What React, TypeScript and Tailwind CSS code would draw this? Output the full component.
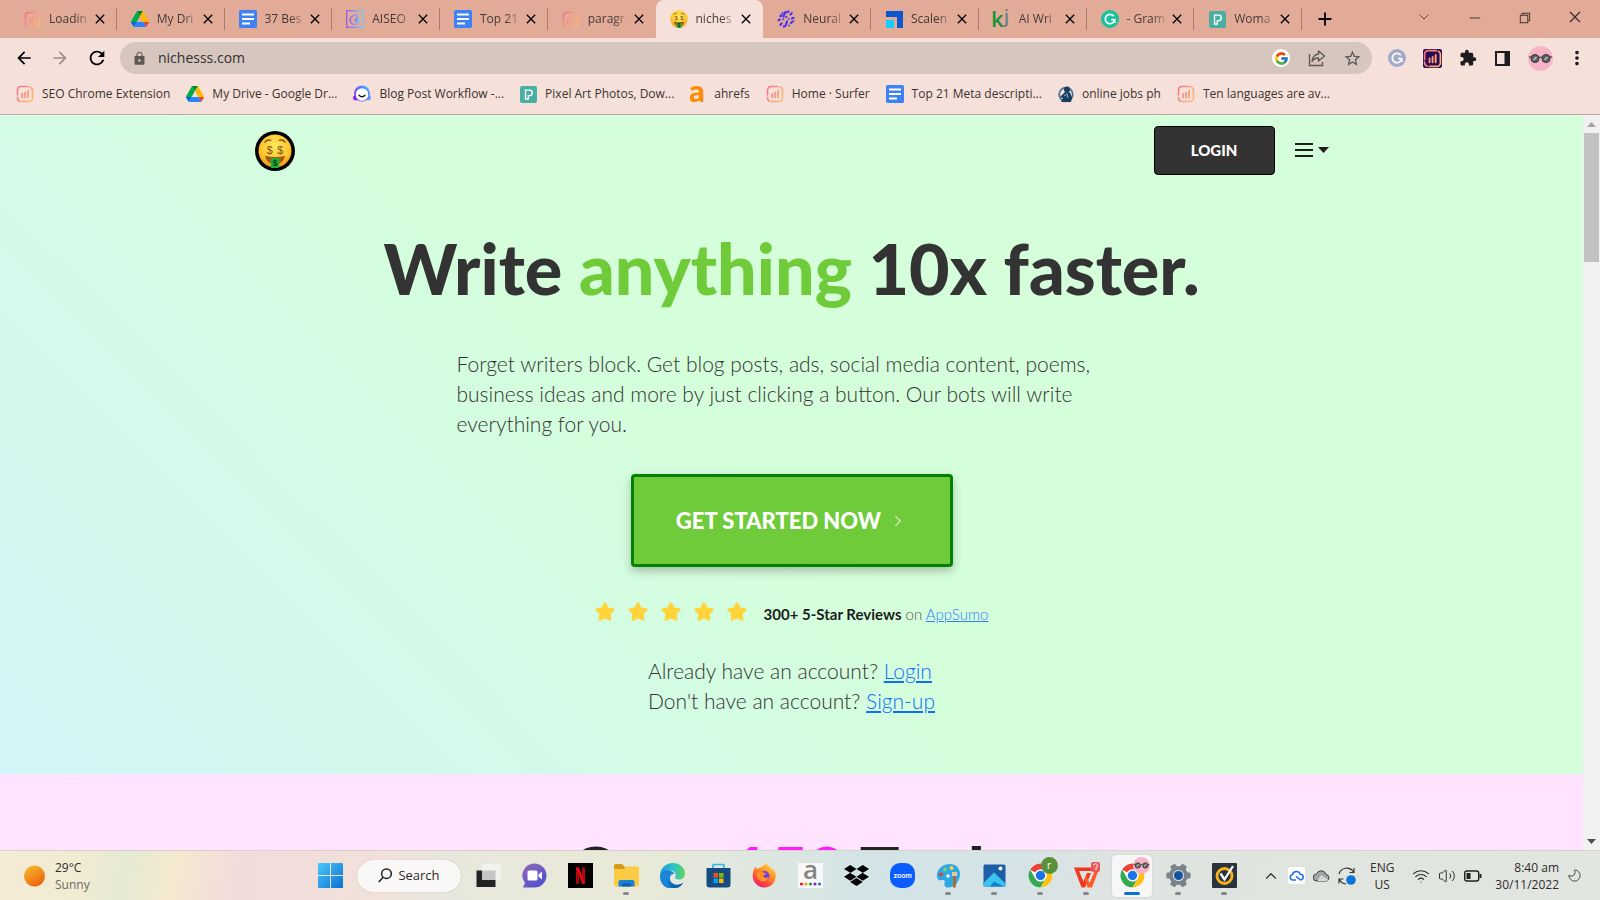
import type { ReactNode } from "react";
import { FcGoogle } from "react-icons/fc";
import { FaDropbox } from "react-icons/fa";
import {
  MdArrowBack,
  MdArrowForward,
  MdRefresh,
  MdLock,
  MdStarBorder,
  MdExtension,
  MdMoreVert,
  MdClose,
  MdAdd,
} from "react-icons/md";
import { VscChromeMinimize, VscChromeRestore, VscChromeClose } from "react-icons/vsc";
import { ChevronDown, ChevronRight, ChevronUp, Moon, Volume2, Wifi } from "lucide-react";

function SurferIcon({ size = 18, dark = false }: { size?: number; dark?: boolean }) {
  return (
    <svg width={size} height={size} viewBox="0 0 18 18" fill="none" className="shrink-0">
      <defs>
        <linearGradient id="surfer" gradientUnits="userSpaceOnUse" x1="1" y1="3" x2="17" y2="12">
          <stop offset="0" stopColor="#f4708a" />
          <stop offset="1" stopColor="#fbb974" />
        </linearGradient>
      </defs>
      {dark && <rect width="18" height="18" rx="2" fill="#2b0a4d" />}
      <g stroke="url(#surfer)" strokeWidth="1.6" strokeLinecap="round">
        <path d="M1.500 10V5a3.500 3.500 0 0 1 3.500-3.500h7.500" />
        <path d="M14.500 2.100A3.500 3.500 0 0 1 16.500 5v8a3.500 3.500 0 0 1-3.500 3.500H6" />
        <path d="M1.500 12.500A3.600 3.600 0 0 0 4 16.300" />
        <path d="M6.200 9v3.600M9.100 7.600v5M12 5.600v7" strokeWidth="1.8" />
      </g>
    </svg>
  );
}

function DriveIcon() {
  return (
    <svg width="18" height="18" viewBox="0 0 87.3 78" className="shrink-0">
      <path fill="#0066da" d="m6.6 66.85 3.85 6.65c.8 1.4 1.95 2.5 3.3 3.3L27.5 53H0c0 1.55.4 3.1 1.2 4.5z" />
      <path fill="#00ac47" d="M43.65 25 29.9 1.2c-1.35.8-2.5 1.9-3.3 3.3L1.2 48.5A9 9 0 0 0 0 53h27.5z" />
      <path fill="#ea4335" d="M73.55 76.8c1.35-.8 2.5-1.9 3.3-3.3l9.2-16c.8-1.4 1.2-2.95 1.2-4.5H59.8l5.85 11.5z" />
      <path fill="#00832d" d="M43.65 25 57.4 1.2C56.05.4 54.5 0 52.9 0H34.4c-1.6 0-3.15.45-4.5 1.2z" />
      <path fill="#2684fc" d="M59.8 53H27.5L13.75 76.8c1.35.8 2.9 1.2 4.5 1.2h50.8c1.6 0 3.15-.45 4.5-1.2z" />
      <path fill="#ffba00" d="m73.4 26.5-12.7-22c-.8-1.4-1.95-2.5-3.3-3.3L43.65 25 59.8 53h27.45c0-1.55-.4-3.1-1.2-4.5z" />
    </svg>
  );
}

function DocsIcon() {
  return (
    <svg width="18" height="18" viewBox="0 0 18 18" className="shrink-0">
      <rect width="18" height="18" rx="1.5" fill="#3f82f5" />
      <path d="M3 4.500h12M3 9h12M3 13.500h8" stroke="#fff" strokeWidth="2" />
    </svg>
  );
}

function AiseoIcon() {
  return (
    <svg width="18" height="18" viewBox="0 0 18 18" fill="none" className="shrink-0">
      <defs>
        <linearGradient id="aiseo" x1="0" y1="0" x2="1" y2="0">
          <stop offset="0" stopColor="#9a63e8" />
          <stop offset="1" stopColor="#7cc6ee" />
        </linearGradient>
      </defs>
      <rect x="0.7" y="0.7" width="16.6" height="16.6" stroke="url(#aiseo)" strokeWidth="1.4" />
      <path d="M12.600 4.400C8 4.600 4.200 6.800 4.200 10.200c0 2.600 2 4.200 4.300 4.200 3 0 4.700-2.300 4.700-5.300" stroke="url(#aiseo)" strokeWidth="1.5" />
      <path d="M12.600 4.400v5.200c-.6 1.800-2 2.600-3.800 2.600-.6-2.800.6-5 3.800-7.800z" fill="url(#aiseo)" />
    </svg>
  );
}

function MoneyFace({ size = 18 }: { size?: number }) {
  return (
    <svg width={size} height={size} viewBox="0 0 32 32" className="shrink-0">
      <defs>
        <radialGradient id="face" cx="0.5" cy="0.35" r="0.65">
          <stop offset="0" stopColor="#ffe95c" />
          <stop offset="0.7" stopColor="#fdc52d" />
          <stop offset="1" stopColor="#f0941c" />
        </radialGradient>
      </defs>
      <circle cx="16" cy="16" r="15.500" fill="url(#face)" />
      <path d="M6.500 7.500q2.500-2.500 5.500-1.500M25.500 7.500Q23 5 20 6" stroke="#8a4b14" strokeWidth="1.300" fill="none" strokeLinecap="round" />
      <g fill="#7a4a12" fontFamily="Liberation Sans, sans-serif" fontSize="10" textAnchor="middle">
        <text x="11" y="18.500">$</text>
        <text x="21" y="18.500">$</text>
      </g>
      <path d="M6.500 20.500q9.500 2.500 19 0-1.500 8-9.500 8t-9.500-8z" fill="#a05c14" />
      <rect x="12" y="22.500" width="8" height="9.500" rx="1.500" fill="#1fae3c" />
      <text x="16" y="30.200" fill="#073d12" fontFamily="Liberation Sans, sans-serif" fontSize="8" fontWeight="700" textAnchor="middle">
        $
      </text>
    </svg>
  );
}

function NeuralIcon() {
  return (
    <svg width="18" height="18" viewBox="0 0 18 18" fill="none" stroke="#4b32f0" strokeLinecap="round" className="shrink-0">
      <g strokeWidth="2.200">
        <path d="M9.500 2.200l2-.8M13.500 4.500l1.200-1.400M15 8.500l1.400-.7M14 13l1-1M4.500 5l-1 1.200M2.800 9.600l-1.200.6M4.500 13.500l-1 1.400M8.500 15.800l-1.600.8M6.500 6.500L8 2.500M10 11.500l-1 3" />
      </g>
      <g strokeWidth="1.800">
        <path d="M6.200 9.200v.1M9 7.200l.5-.6M11.800 8.800v.1M12 15.500v.1M5.500 2.700v.1M16.500 11v.1" />
      </g>
    </svg>
  );
}

function ScalenutIcon() {
  return (
    <svg width="17" height="17" viewBox="0 0 17 17" className="shrink-0">
      <path d="M0 0h17v17h-6V6H0z" fill="#0a57d0" />
      <path d="M0 9h8v8H0z" fill="#16cdfb" />
    </svg>
  );
}

function GrammarlyIcon({ fill = "#15c39a" }: { fill?: string }) {
  return (
    <svg width="18" height="18" viewBox="0 0 18 18" className="shrink-0">
      <circle cx="9" cy="9" r="9" fill={fill} />
      <path d="M12.800 6.200A4.700 4.700 0 1 0 13.700 9.600H10.200M13.700 9.600v3.400" stroke="#fff" strokeWidth="1.700" fill="none" />
    </svg>
  );
}

function PixelIcon() {
  return (
    <svg width="17" height="17" viewBox="0 0 17 17" className="shrink-0">
      <rect width="17" height="17" rx="2" fill="#4aafa2" />
      <path d="M5.500 13V4.200h4a2.700 2.700 0 0 1 0 5.500H8.300V13z" fill="none" stroke="#fff" strokeWidth="1.300" />
    </svg>
  );
}

function BlogIcon() {
  return (
    <svg width="18" height="18" viewBox="0 0 18 18" className="shrink-0">
      <defs>
        <linearGradient id="blog" x1="0" y1="1" x2="1" y2="0">
          <stop offset="0" stopColor="#8b2cf5" />
          <stop offset="0.5" stopColor="#6a5cf6" />
          <stop offset="1" stopColor="#2fd0fb" />
        </linearGradient>
      </defs>
      <circle cx="9" cy="8.500" r="8" fill="url(#blog)" />
      <circle cx="2.600" cy="12.800" r="2.600" fill="#8b2cf5" />
      <circle cx="15.200" cy="12.600" r="2.600" fill="#5d8df8" />
      <circle cx="9" cy="9.500" r="6.300" fill="#fff" />
      <path d="M6 10.200q3 3 6 0" stroke="#111" strokeWidth="1.300" fill="none" strokeLinecap="round" />
    </svg>
  );
}

function KjIcon() {
  return (
    <svg width="19" height="20" viewBox="0 0 19 20" className="shrink-0" fontFamily="Open Sans, sans-serif" fontWeight="600">
      <text x="-1" y="18" fontSize="22" fill="#14953a">
        k
      </text>
      <text x="12" y="14" fontSize="18" fill="#6d7f86">
        j
      </text>
    </svg>
  );
}

function AhrefsIcon() {
  return (
    <svg width="16" height="17" viewBox="0 0 16 17" className="shrink-0">
      <text x="-1" y="16" fill="#ff8b00" fontFamily="Lato, sans-serif" fontSize="31" fontWeight="900">
        a
      </text>
    </svg>
  );
}

function JobsIcon() {
  return (
    <svg width="16" height="17" viewBox="0 0 16 17" className="shrink-0">
      <circle cx="8" cy="8.500" r="6.800" fill="none" stroke="#4f7391" strokeWidth="1.800" />
      <circle cx="9" cy="3.400" r="3" fill="#123f63" />
      <path d="M7 6l5 .5 2 5-1 4.500H3l2-4-3-1 3-3z" fill="#123f63" />
      <path d="M6 10l3-2 1 4" stroke="#9fb9cc" fill="none" />
    </svg>
  );
}

function ChromeIcon({ size = 25 }: { size?: number }) {
  return (
    <svg width={size} height={size} viewBox="0 0 48 48" className="shrink-0">
      <circle cx="24" cy="24" r="23" fill="#fff" />
      <path d="M4.080 12.500A23 23 0 0 1 43.900 12.500H24A11.500 11.500 0 0 0 14 18.300z" fill="#ea4335" />
      <path d="M4.080 12.500A23 23 0 0 0 24 47L33.960 29.750A11.500 11.500 0 0 1 14.040 29.750z" fill="#34a853" />
      <path d="M43.900 12.500A23 23 0 0 1 24 47L33.960 29.750A11.500 11.500 0 0 0 24 12.500z" fill="#fbc116" />
      <circle cx="24" cy="24" r="11.500" fill="#fff" />
      <circle cx="24" cy="24" r="9" fill="#1a73e8" />
    </svg>
  );
}

function GlassesAvatar({ size }: { size: number }) {
  return (
    <svg width={size} height={size} viewBox="0 0 25 25" className="shrink-0">
      <circle cx="12.500" cy="12.500" r="12.500" fill="#f7b4c8" />
      <circle cx="7" cy="12.500" r="4" fill="#5d6062" stroke="#333" />
      <circle cx="18" cy="12.500" r="4" fill="#5d6062" stroke="#333" />
      <path d="M11 11.500q1.500-1 3 0M1 11h2M22 11h2" stroke="#222" fill="none" />
      <path d="M5.500 14l3-3M16.500 14l3-3" stroke="#b9c1c2" strokeWidth="1.500" />
    </svg>
  );
}

const tabs: { title: string; icon: ReactNode; active?: boolean }[] = [
  { title: "Loadin", icon: <SurferIcon size={17} /> },
  { title: "My Dri", icon: <DriveIcon /> },
  { title: "37 Bes", icon: <DocsIcon /> },
  { title: "AISEO", icon: <AiseoIcon /> },
  { title: "Top 21", icon: <DocsIcon /> },
  { title: "paragr", icon: <SurferIcon size={17} /> },
  { title: "niches", icon: <MoneyFace />, active: true },
  { title: "Neural", icon: <NeuralIcon /> },
  { title: "Scalen", icon: <ScalenutIcon /> },
  { title: "AI Wri", icon: <KjIcon /> },
  { title: "- Gram", icon: <GrammarlyIcon /> },
  { title: "Woma", icon: <PixelIcon /> },
];

const bookmarks: { title: string; icon: ReactNode }[] = [
  { title: "SEO Chrome Extension", icon: <SurferIcon /> },
  { title: "My Drive - Google Dr...", icon: <DriveIcon /> },
  { title: "Blog Post Workflow -...", icon: <BlogIcon /> },
  { title: "Pixel Art Photos, Dow...", icon: <PixelIcon /> },
  { title: "ahrefs", icon: <AhrefsIcon /> },
  { title: "Home · Surfer", icon: <SurferIcon /> },
  { title: "Top 21 Meta descripti...", icon: <DocsIcon /> },
  { title: "online jobs ph", icon: <JobsIcon /> },
  { title: "Ten languages are av...", icon: <SurferIcon /> },
];

function TabStrip() {
  return (
    <div className="flex h-[38px] shrink-0 bg-[#e2ab98] pl-[9px]">
      <div className="flex min-w-0 flex-1">
        {tabs.map((t, i) => {
          const beforeActive = tabs[i + 1]?.active;
          return (
            <div
              key={i}
              className={`flex min-w-0 flex-1 items-center pl-[14px] ${
                t.active ? "rounded-t-lg bg-[#f5e1d9]" : ""
              }`}
            >
              <span className="flex w-[18px] shrink-0 justify-center">{t.icon}</span>
              <span className="ml-2 min-w-0 flex-1 [mask-image:linear-gradient(to_right,black_60%,transparent)] text-xs whitespace-nowrap text-[#453a37]">
                {t.title}
              </span>
              <button aria-label={`Close ${t.title}`} className="shrink-0 text-black">
                <MdClose size={16} />
              </button>
              <span className={`ml-2 h-[22px] w-px ${t.active || beforeActive ? "" : "bg-[#a87c6e]"}`} />
            </div>
          );
        })}
      </div>
      <div className="flex w-[298px] shrink-0 items-center text-[#3a302d]">
        <button aria-label="New tab" className="ml-3 text-black">
          <MdAdd size={22} />
        </button>
        <div className="mr-[17px] mb-1 ml-auto flex items-center gap-[35px]">
          <button aria-label="Search tabs">
            <ChevronDown size={16} strokeWidth={1.25} />
          </button>
          <button aria-label="Minimize">
            <VscChromeMinimize size={15} />
          </button>
          <button aria-label="Restore">
            <VscChromeRestore size={15} />
          </button>
          <button aria-label="Close window">
            <VscChromeClose size={16} />
          </button>
        </div>
      </div>
    </div>
  );
}

function Toolbar() {
  return (
    <div className="flex h-10 shrink-0 items-center bg-[#f5e1d9] pr-4 pl-[14px]">
      <div className="flex w-[106px] items-center gap-4">
        <button aria-label="Back">
          <MdArrowBack size={20} />
        </button>
        <button aria-label="Forward" className="text-[#9c8f8a]">
          <MdArrowForward size={20} />
        </button>
        <button aria-label="Reload">
          <MdRefresh size={22} />
        </button>
      </div>
      <div className="flex h-8 min-w-0 flex-1 items-center rounded-full bg-[#d6c6be] pr-[10px] pl-3 text-[#5f5855]">
        <MdLock size={15} className="shrink-0" />
        <input
          aria-label="Address"
          defaultValue="nichesss.com"
          className="ml-[11px] min-w-0 flex-1 bg-transparent text-sm text-[#35302e] outline-none"
        />
        <span className="flex size-[18px] items-center justify-center rounded-full bg-white">
          <FcGoogle size={15} />
        </span>
        <button aria-label="Share" className="ml-[18px]">
          <svg width="18" height="18" viewBox="0 0 18 18" fill="none" stroke="currentColor" strokeWidth="1.400">
            <path d="M1.500 5v11.500h13V13" />
            <path d="M10.500 2l6 5-6 5V9c-3 0-5 1-6.500 3.500C4.500 8.500 6.500 5.500 10.500 5z" strokeLinejoin="round" />
          </svg>
        </button>
        <button aria-label="Bookmark" className="ml-[17px]">
          <MdStarBorder size={19} />
        </button>
      </div>
      <div className="ml-4 flex items-center gap-[17px] text-[#1d1d20]">
        <GrammarlyIcon fill="#a3aac9" />
        <SurferIcon size={19} dark />
        <button aria-label="Extensions">
          <MdExtension size={18} />
        </button>
        <button aria-label="Side panel">
          <svg width="17" height="17" viewBox="0 0 17 17">
            <path fillRule="evenodd" d="M1 1h15v15H1zM3 3h7.500v11H3z" fill="currentColor" />
          </svg>
        </button>
        <GlassesAvatar size={25} />
        <button aria-label="Menu" className="-mx-1">
          <MdMoreVert size={22} />
        </button>
      </div>
    </div>
  );
}

function Bookmarks() {
  return (
    <nav className="flex h-[37px] shrink-0 items-center gap-4 overflow-hidden border-b border-[#c6a9a5] bg-[#f5e1d9] px-4 pb-1">
      {bookmarks.map((b) => (
        <a key={b.title} href="#" className="flex shrink-0 items-center gap-2 text-xs text-[#3b3331]">
          {b.icon}
          {b.title}
        </a>
      ))}
    </nav>
  );
}

function Star() {
  return (
    <svg width="20" height="20" viewBox="0 0 20 20" className="shrink-0">
      <path
        d="M10 2l2.500 5 5.500.8-4 3.900.9 5.500-4.900-2.600-4.900 2.600.9-5.500-4-3.900 5.500-.8z"
        fill="#ffd43b"
        stroke="#ffd43b"
        strokeWidth="3"
        strokeLinejoin="round"
      />
    </svg>
  );
}

function Page() {
  return (
    <main className="min-w-0 flex-1 overflow-hidden bg-[#ffe3ff] font-['Lato',sans-serif] text-[#333]">
      <section className="bg-[linear-gradient(45deg,#d1f5f8,#d5ffda_48%)] pb-[58px]">
        <header className="mx-auto flex max-w-[1074px] items-center pt-[11px]">
          <a href="#" aria-label="Home" className="flex size-10 items-center justify-center rounded-full bg-black">
            <MoneyFace size={34} />
          </a>
          <button className="ml-auto h-[49px] w-[121px] rounded border border-black bg-[#333] text-[15px] font-black text-white">
            LOGIN
          </button>
          <button aria-label="Open menu" className="ml-5 text-[#1f1f1f]">
            <svg width="34" height="16" viewBox="0 0 34 16" fill="currentColor">
              <path d="M0 0h18v2H0zM0 6h18v2H0zM0 12h18v2H0zM23 4h11l-5.500 6z" />
            </svg>
          </button>
        </header>
        <div className="flex flex-col items-center">
          <h1 className="mt-[53px] text-[70px] leading-[80px] font-black">
            Write <span className="text-[#6fcb3a]">anything</span> 10x faster.
          </h1>
          <p className="mt-[41px] w-[670px] text-[21px] leading-[30px] font-light">
            Forget writers block. Get blog posts, ads, social media content, poems, business ideas and more by just
            clicking a button. Our bots will write everything for you.
          </p>
          <button className="mt-[35px] flex h-[93px] w-[322px] items-center justify-center gap-2 rounded border-[3px] border-[#028102] bg-[#6fcb3a] text-[22px] font-black text-white shadow-[0_4px_10px_rgba(0,0,0,0.25)]">
            GET STARTED NOW
            <ChevronRight size={18} className="opacity-60" />
          </button>
          <div className="mt-[33px] flex items-center gap-[13px]">
            {[0, 1, 2, 3, 4].map((i) => (
              <Star key={i} />
            ))}
            <p className="ml-1 pt-1 text-[15px] leading-5 font-light text-[#555]">
              <strong className="font-bold text-[#1c1c1c]">300+ 5-Star Reviews</strong> on{" "}
              <a href="#" className="text-[#2b7cff] underline">
                AppSumo
              </a>
            </p>
          </div>
          <p className="mt-8 text-[21px] leading-[30px] font-light">
            Already have an account?{" "}
            <a href="#" className="text-[#0d6efd] underline">
              Login
            </a>
            <br />
            Don't have an account?{" "}
            <a href="#" className="text-[#0d6efd] underline">
              Sign-up
            </a>
          </p>
        </div>
      </section>
      <section className="pt-[57px] text-center">
        <h2 className="text-[66px] leading-[80px] font-black text-[#222]">
          Over <span className="text-[#ff1cf7]">150</span> Tools
        </h2>
      </section>
    </main>
  );
}

function Scrollbar() {
  return (
    <div className="flex w-[17px] shrink-0 flex-col items-center bg-[#f1f1f1]">
      <svg width="17" height="18" viewBox="0 0 17 18" className="shrink-0">
        <path d="M4 12h9l-4.500-5z" fill="#a3a3a3" />
      </svg>
      <div className="h-[129px] w-[15px] bg-[#c1c1c1]" />
      <svg width="17" height="18" viewBox="0 0 17 18" className="mt-auto shrink-0">
        <path d="M4 7h9l-4.500 5z" fill="#505050" />
      </svg>
    </div>
  );
}

const apps: { name: string; icon: ReactNode; running?: boolean; focused?: boolean }[] = [
  {
    name: "Task view",
    icon: (
      <svg width="25" height="25" viewBox="0 0 25 25">
        <rect x="0.500" y="7.500" width="19" height="16.500" fill="#222" />
        <rect x="6" y="0.500" width="19" height="16.500" fill="#f3f3f3" fillOpacity="0.780" />
      </svg>
    ),
  },
  {
    name: "Chat",
    icon: (
      <svg width="25" height="25" viewBox="0 0 25 25">
        <defs>
          <linearGradient id="chat" x1="0" y1="0" x2="0.800" y2="1">
            <stop offset="0" stopColor="#9469b9" />
            <stop offset="1" stopColor="#4c50d0" />
          </linearGradient>
        </defs>
        <path d="M12.500.5a12 12 0 1 1 0 24H1l2-4.500A12 12 0 0 1 12.500.5z" fill="url(#chat)" />
        <rect x="5.500" y="7.500" width="10" height="10" rx="1.500" fill="#fff" />
        <path d="M16.500 11.500l3.500-3v8l-3.500-3z" fill="#fff" />
      </svg>
    ),
  },
  {
    name: "Netflix",
    icon: (
      <svg width="25" height="25" viewBox="0 0 25 25">
        <rect width="25" height="25" fill="#000" />
        <path d="M8 4.500h3V20.500L8 21zM14 4.500h3V21l-3-.5z" fill="#b1060f" />
        <path d="M8 4.500h3l6 16.500-3-.5z" fill="#e50914" />
      </svg>
    ),
  },
  {
    name: "File Explorer",
    running: true,
    icon: (
      <svg width="25" height="25" viewBox="0 0 25 25">
        <path d="M0 3a2 2 0 0 1 2-2h6l3 3v4H0z" fill="#d99b16" />
        <path d="M0 6h10l2-2.500h13v18a2 2 0 0 1-2 2H2a2 2 0 0 1-2-2z" fill="#fccb45" />
        <path d="M4.500 19a2 2 0 0 1 2-2h12a2 2 0 0 1 2 2v4.500h-16z" fill="#1583d6" />
        <path d="M8 20.500h9v3H8z" fill="#0f62a9" />
      </svg>
    ),
  },
  {
    name: "Edge",
    icon: (
      <svg width="25" height="25" viewBox="0 0 25 25">
        <defs>
          <linearGradient id="edgeTop" x1="0" y1="0.500" x2="1" y2="0.500">
            <stop offset="0" stopColor="#1d97dc" />
            <stop offset="0.550" stopColor="#2fc3c9" />
            <stop offset="1" stopColor="#61d65a" />
          </linearGradient>
          <linearGradient id="edgeLow" x1="0" y1="0" x2="1" y2="1">
            <stop offset="0" stopColor="#1a86d9" />
            <stop offset="1" stopColor="#0c4c97" />
          </linearGradient>
        </defs>
        <path d="M0 12C.5 5 6 0 12.800 0 20 0 25 5 25 10.500c0 4-3 6-6 6-2.800 0-4.500-1.200-3.800-2.500 1.800-3-.7-6.500-5.200-6.500C5 7.500 1.500 9 0 12z" fill="url(#edgeTop)" />
        <path d="M0 12.500c1-4 5-6 9.500-5 2.500.6 4.500 2 5 3.500-5-1-7 7-.5 10 3.500 1.500 7 .5 9.500-1.500A12.500 12.500 0 0 1 0 12.500z" fill="#1b84d6" />
        <path d="M8.500 12.500c-1 5 2.500 9.500 8 9.500 2.500 0 5-.9 7-2.500a12.500 12.500 0 0 1-11 5.500C7 23.500 6 16 8.500 12.500z" fill="url(#edgeLow)" />
      </svg>
    ),
  },
  {
    name: "Microsoft Store",
    icon: (
      <svg width="25" height="25" viewBox="0 0 25 25">
        <path d="M7 6V2.500a1 1 0 0 1 1-1h9a1 1 0 0 1 1 1V6" fill="none" stroke="#29b6ef" strokeWidth="1.700" />
        <path d="M.5 5h24v16.500a3 3 0 0 1-3 3h-18a3 3 0 0 1-3-3z" fill="#174a80" />
        <path d="M7.500 10h4.500v4.500H7.500z" fill="#f25022" />
        <path d="M13 10h4.500v4.500H13z" fill="#7fba00" />
        <path d="M7.500 15.500h4.500V20H7.500z" fill="#00a4ef" />
        <path d="M13 15.500h4.500V20H13z" fill="#ffb900" />
      </svg>
    ),
  },
  {
    name: "Firefox",
    icon: (
      <svg width="25" height="25" viewBox="0 0 25 25">
        <defs>
          <linearGradient id="fox" x1="0.850" y1="0" x2="0.250" y2="1">
            <stop offset="0" stopColor="#ffe54a" />
            <stop offset="0.450" stopColor="#ff8a1f" />
            <stop offset="0.800" stopColor="#ff3b4a" />
            <stop offset="1" stopColor="#e31587" />
          </linearGradient>
        </defs>
        <path d="M3.500 3.500C4 5 4.500 5.500 6 6c1.500-1.500 3-2 4.500-2.200C11 3 13 1 14.500 0c.5 3 5 4 6 7.500.5-.5.500-1.500.3-2.500 4 5 3.700 11.500.2 15.700A11.500 11.500 0 0 1 2.500 19C-.5 14.500.5 8 3.500 3.500z" fill="url(#fox)" />
        <circle cx="12.500" cy="13" r="5" fill="#7b3ee0" />
        <path d="M5 10c2-1.500 4.500-1.500 6.500-.5l2.500 1c-.5 1.500-3 1.500-3 2.500s3 3 6 1c-1 4-5.500 5.500-9 3.500C5.500 16 4.500 13 5 10z" fill="#ff9422" />
      </svg>
    ),
  },
  {
    name: "Amazon",
    icon: (
      <svg width="25" height="25" viewBox="0 0 25 25">
        <rect width="25" height="25" fill="#f8f8f8" />
        <text x="12.500" y="16" textAnchor="middle" fontFamily="Open Sans, sans-serif" fontWeight="600" fontSize="26" fill="#858585">
          a
        </text>
        <circle cx="3.500" cy="21" r="1.600" fill="#e8121c" />
        <circle cx="8" cy="21" r="1.600" fill="#f39b16" />
        <circle cx="12.500" cy="21" r="1.600" fill="#2aa043" />
        <circle cx="17" cy="21" r="1.600" fill="#7b2bb5" />
        <circle cx="21.500" cy="21" r="1.600" fill="#1977cf" />
      </svg>
    ),
  },
  { name: "Dropbox", icon: <FaDropbox size={25} className="text-black" /> },
  {
    name: "Zoom",
    icon: (
      <svg width="25" height="25" viewBox="0 0 25 25">
        <rect width="25" height="25" rx="10" fill="#0b5cff" />
        <text x="12.500" y="15" textAnchor="middle" fontFamily="Inter, sans-serif" fontWeight="600" fontSize="7" fill="#fff">
          zoom
        </text>
      </svg>
    ),
  },
  {
    name: "Paint",
    running: true,
    icon: (
      <svg width="25" height="25" viewBox="0 0 25 25">
        <path d="M14 1C6 1 0 7 1 14c.5 4 4 3.500 5.500 3 2-.5 3 1 2 3-.8 2 .5 4.500 3.500 4.500C19 24.500 24 18 24 11 24 5 20 1 14 1z" fill="#2fa8e6" />
        <circle cx="9" cy="6.500" r="2" fill="#79d35b" />
        <circle cx="15.500" cy="5" r="2" fill="#fbd13f" />
        <circle cx="5" cy="11.500" r="2" fill="#d5413b" />
        <circle cx="12" cy="13" r="1.800" fill="#f2f7fa" />
        <path d="M16 9h5v4h-5z" fill="#e9c9a2" />
        <path d="M17.200 13h2.600v10.500a1.300 1.300 0 0 1-2.600 0z" fill="#b5651d" />
      </svg>
    ),
  },
  {
    name: "Photos",
    running: true,
    icon: (
      <svg width="25" height="25" viewBox="0 0 25 25">
        <rect x="1.500" y="1.500" width="22" height="22" rx="1.500" fill="#1c5fa8" />
        <path d="M1.500 20L12 9.500l11.500 11v1.500a1.500 1.500 0 0 1-1.500 1.500H3A1.500 1.500 0 0 1 1.500 22z" fill="#3cc2ee" />
        <path d="M8 23.500l4-5 10 5z" fill="#1382cf" />
        <circle cx="18.500" cy="5.500" r="2" fill="#fff" />
      </svg>
    ),
  },
  {
    name: "Chrome",
    running: true,
    icon: (
      <>
        <ChromeIcon />
        <span className="absolute -top-[6px] -right-[5px] flex size-[17px] items-center justify-center rounded-full bg-[#5c913b] text-[10px] text-white">
          r
        </span>
      </>
    ),
  },
  {
    name: "WPS Office",
    running: true,
    icon: (
      <svg width="27" height="27" viewBox="0 0 27 27">
        <path d="M1 5.500h18.500V9H6l4.500 10.500L14 11h4l-6 14.500H8.500z" fill="#f0381f" />
        <path d="M13 12.500l3.500 8.500L23 6h3.500l-7.500 19.500h-4.500l-3-8z" fill="#ff5a2a" />
        <rect x="18" y="0" width="9" height="10" rx="2" fill="#e9585d" />
        <path d="M20.500 3.500a2 2 0 1 1 2.500 2.200V8" stroke="#fff" fill="none" />
      </svg>
    ),
  },
  {
    name: "Chrome",
    running: true,
    focused: true,
    icon: (
      <>
        <ChromeIcon />
        <span className="absolute -top-[6px] -right-[5px]">
          <GlassesAvatar size={17} />
        </span>
      </>
    ),
  },
  {
    name: "Settings",
    running: true,
    icon: (
      <svg width="25" height="25" viewBox="0 0 25 25">
        <g fill="#7b8288">
          <circle cx="12.500" cy="12.500" r="9.500" />
          <rect x="9.500" y="0.300" width="6" height="24.400" rx="1.500" transform="rotate(30 12.500 12.500)" />
          <rect x="9.500" y="0.300" width="6" height="24.400" rx="1.500" transform="rotate(90 12.500 12.500)" />
          <rect x="9.500" y="0.300" width="6" height="24.400" rx="1.500" transform="rotate(150 12.500 12.500)" />
        </g>
        <circle cx="12.500" cy="12.500" r="5.500" fill="#dfe5ea" />
        <circle cx="12.500" cy="12.500" r="4.500" fill="#13549c" />
      </svg>
    ),
  },
  {
    name: "Norton",
    running: true,
    icon: (
      <svg width="25" height="25" viewBox="0 0 25 25">
        <rect width="25" height="25" rx="1" fill="#28333c" />
        <circle cx="12.500" cy="13" r="7.500" fill="none" stroke="#fbb01b" strokeWidth="2.800" />
        <path d="M8.500 10.500l4 6L21 3" stroke="#fff" strokeWidth="2.300" fill="none" />
      </svg>
    ),
  },
];

function Taskbar() {
  return (
    <footer className="flex h-[50px] shrink-0 items-center border-t border-[#d6d3cc] bg-[linear-gradient(100deg,#f4ecd6_0%,#f2ebd3_5%,#e5ead5_8%,#f5e9cf_11%,#f1dcdb_15%,#f1e0da_23%,#e8e7dd_28%,#e9ead8_40%,#d3e4e6_54%,#d5e3e7_63%,#e0e4e0_70%,#e2e6e0_100%)] text-[#2b2b2b]">
      <div className="flex min-w-0 flex-1 items-center gap-2.5 pl-6 text-xs leading-[17px]">
        <svg width="21" height="22" viewBox="0 0 21 22">
          <defs>
            <linearGradient id="sun" x1="0.200" y1="0" x2="0.800" y2="1">
              <stop offset="0" stopColor="#f5bb2e" />
              <stop offset="1" stopColor="#ee5a0c" />
            </linearGradient>
          </defs>
          <circle cx="10.500" cy="11" r="10.500" fill="url(#sun)" />
        </svg>
        <div>
          <div>29°C</div>
          <div className="text-[#6b6a63]">Sunny</div>
        </div>
      </div>
      <div className="flex items-center">
        <button aria-label="Start">
          <svg width="25" height="25" viewBox="0 0 25 25">
            <defs>
              <linearGradient id="win" x1="0" y1="0" x2="1" y2="1">
                <stop offset="0" stopColor="#4cc9fb" />
                <stop offset="1" stopColor="#0a6fd0" />
              </linearGradient>
            </defs>
            <path d="M1 0h11v12H0V1a1 1 0 0 1 1-1zM13 0h11a1 1 0 0 1 1 1v11H13zM0 13h12v12H1a1 1 0 0 1-1-1zM13 13h12v11a1 1 0 0 1-1 1H13z" fill="url(#win)" />
          </svg>
        </button>
        <button className="mr-1 ml-[14px] flex h-8 w-[104px] items-center justify-center gap-1.5 rounded-full bg-[#faf8f6] text-[13px] shadow-[0_0_1px_rgba(0,0,0,0.3)]">
          <svg width="14" height="15" viewBox="0 0 14 15" fill="none" stroke="#222" strokeWidth="1.500">
            <circle cx="8.500" cy="5.700" r="4.800" />
            <path d="M5.200 9.200L.7 14" />
          </svg>
          Search
        </button>
        {apps.map((a, i) => (
          <button
            key={i}
            aria-label={a.name}
            className={`relative mx-[3px] flex h-[42px] w-10 items-center justify-center rounded ${
              a.focused ? "bg-white/70 shadow-[0_0_1px_rgba(0,0,0,0.3)]" : ""
            }`}
          >
            <span className="relative">{a.icon}</span>
            {a.running && (
              <span
                className={`absolute bottom-0.5 h-[3px] rounded-full ${
                  a.focused ? "w-4 bg-[#0a6fd0]" : "w-1.5 bg-[#85888a]"
                }`}
              />
            )}
          </button>
        ))}
      </div>
      <div className="flex w-[353px] shrink-0 items-center pr-[18px] pl-[15px] text-xs leading-[17px]">
        <ChevronUp size={18} strokeWidth={1.500} />
        <svg width="17" height="17" viewBox="0 0 17 17" className="ml-2">
          <rect width="17" height="17" rx="2" fill="#fff" />
          <path d="M8 13H4.500a2.800 2.800 0 0 1 0-5.500 4 4 0 0 1 7.700-.3 2.900 2.900 0 0 1 .3 5.800L8 9.300" fill="none" stroke="#1f6feb" strokeWidth="1.500" />
        </svg>
        <svg width="17" height="13" viewBox="0 0 17 13" className="ml-2">
          <path d="M4 12a3.500 3.500 0 0 1-.5-7A5 5 0 0 1 13 5.500a3.300 3.300 0 0 1 .5 6.500z" fill="#a4a6a6" stroke="#3c3c3c" />
          <path d="M8 6l7.500 5-2 1H4.500z" fill="#d5d7d6" />
        </svg>
        <svg width="18" height="18" viewBox="0 0 18 18" fill="none" stroke="#333" strokeWidth="1.200" className="ml-2">
          <path d="M1 7a8 8 0 0 1 14.500-2M16 1v4.500h-4.500M1 16.500V12h4.500M1.500 12.500A8 8 0 0 0 8 17" />
          <circle cx="13" cy="13" r="4.800" fill="#0a74da" stroke="none" />
        </svg>
        <div className="ml-[14px] text-center">
          ENG
          <br />
          US
        </div>
        <Wifi size={18} strokeWidth={1.500} className="ml-[18px]" />
        <Volume2 size={18} strokeWidth={1.300} className="ml-2" />
        <svg width="18" height="12" viewBox="0 0 18 12" fill="none" stroke="#222" className="ml-2">
          <rect x="0.700" y="1" width="14" height="10" rx="2" strokeWidth="1.400" />
          <path d="M2.500 3h4v6h-4z" fill="#222" stroke="none" />
          <path d="M16.500 4v4" strokeWidth="2" />
        </svg>
        <div className="ml-auto text-right">
          8:40 am
          <br />
          30/11/2022
        </div>
        <Moon size={15} strokeWidth={1.300} className="ml-2 -scale-x-100" />
      </div>
    </footer>
  );
}

export default function App() {
  return (
    <div className="flex h-screen flex-col overflow-hidden font-['Open_Sans','Noto_Sans',sans-serif]">
      <TabStrip />
      <Toolbar />
      <Bookmarks />
      <div className="flex min-h-0 flex-1">
        <Page />
        <Scrollbar />
      </div>
      <Taskbar />
    </div>
  );
}
